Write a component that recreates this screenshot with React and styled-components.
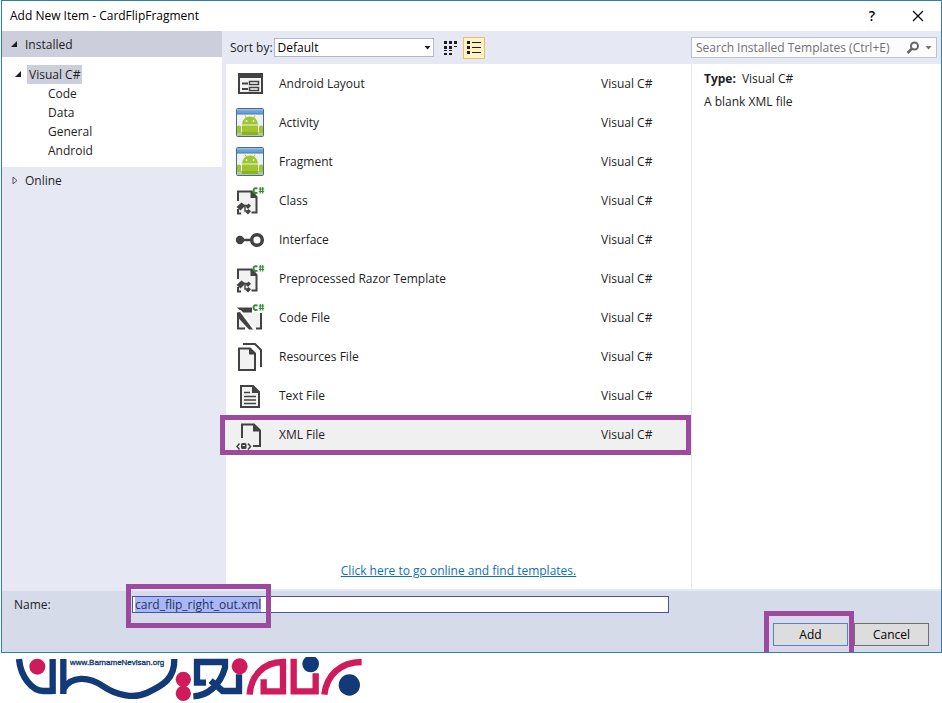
import React, { useLayoutEffect, useRef } from "react";
import styled, { createGlobalStyle, css } from "styled-components";

const GlobalStyle = createGlobalStyle`
  *, *::after { box-sizing: border-box; }
  body {
    margin: 0;
    background: #fff;
    color: #1e1e1e;
    font: 12px/16px "Open Sans", "Noto Sans", sans-serif;
  }
  button, input, select { font: inherit; color: inherit; margin: 0; }
`;

const INK = "#424242";
const PURPLE = "#9b4a9e";

const Page = styled.div`
  padding-left: 1px;
`;

const Dialog = styled.main`
  display: flex;
  flex-direction: column;
  border: 1px solid #2f7fb0;
  background: #e6e9f4;
`;

const TitleBar = styled.header`
  display: flex;
  align-items: center;
  height: 30px;
  padding-left: 8px;
  background: #fff;
  color: #000;
`;

const Title = styled.h1`
  flex: 1;
  margin: 0;
  font-size: 12px;
  font-weight: 400;
`;

const CaptionButton = styled.button`
  display: grid;
  place-items: center;
  width: 46px;
  height: 30px;
  padding: 0;
  border: 0;
  background: none;
  font-size: 14px;
  font-weight: 600;
`;

const Body = styled.div`
  display: grid;
  grid-template-columns: 220px minmax(0, 1fr);
  column-gap: 4px;
`;

const Sidebar = styled.nav``;

const Section = styled.button`
  display: flex;
  align-items: center;
  gap: 6px;
  width: 100%;
  height: 26px;
  padding: 1px 0 0 8px;
  border: 0;
  text-align: left;
  background: ${(p) => (p.$active ? "#cccedb" : "none")};
`;

const Tree = styled.ul`
  margin: 0;
  padding: 8px 0 7px 12px;
  list-style: none;
  background: #fff;
`;

const TreeItem = styled.li`
  display: flex;
  align-items: center;
  gap: 4px;
  height: 19px;
  padding-left: ${(p) => (p.$child ? "32px" : "0")};
`;

const TreeLabel = styled.button`
  height: 19px;
  padding: 0 2px;
  border: 0;
  background: ${(p) => (p.$selected ? "#cccedb" : "none")};
`;

const Workspace = styled.div`
  display: flex;
  flex-direction: column;
`;

const Toolbar = styled.div`
  display: flex;
  align-items: center;
  height: 33px;
  padding: 0 4px;
`;

const SelectBox = styled.div`
  position: relative;
  width: 160px;
  margin: 0 5px 0 1px;
  svg { position: absolute; right: 3px; top: 8px; pointer-events: none; }
`;

const SortSelect = styled.select`
  display: block;
  appearance: none;
  width: 100%;
  height: 19px;
  padding: 0 3px;
  border: 1px solid #b4b8cc;
  border-radius: 0;
  background: #fff;
  color: #000;
`;

const ViewButton = styled.button`
  display: grid;
  place-items: center;
  width: 22px;
  height: 22px;
  margin-right: 2px;
  padding: 0;
  border: 1px solid ${(p) => (p.$active ? "#e5c365" : "transparent")};
  background: ${(p) => (p.$active ? "#fdf2c4" : "none")};
`;

const SearchBox = styled.div`
  display: flex;
  align-items: center;
  gap: 5px;
  width: 246px;
  height: 21px;
  margin-left: auto;
  padding-right: 4px;
  border: 1px solid #bcc0d2;
  background: #fcfcfd;
`;

const SearchInput = styled.input`
  flex: 1;
  min-width: 0;
  height: 19px;
  padding: 0 4px;
  border: 0;
  background: none;
  outline: none;
  &::placeholder { color: #717171; opacity: 1; }
`;

const Panels = styled.div`
  display: grid;
  grid-template-columns: minmax(0, 1fr) 250px;
  margin-bottom: 2px;
  background: #fff;
`;

const Templates = styled.section`
  display: flex;
  flex-direction: column;
`;

const TemplateList = styled.ul`
  margin: 0;
  padding: 0;
  list-style: none;
`;

const frame = css`
  content: "";
  position: absolute;
  border: 5px solid ${PURPLE};
  pointer-events: none;
  z-index: 1;
`;

const Row = styled.li`
  position: relative;
  display: grid;
  grid-template-columns: 32px minmax(0, 1fr) 90px;
  column-gap: 13px;
  align-items: center;
  height: 39px;
  padding-left: 8px;
  background: ${(p) => (p.$selected ? "#f0f0f0" : "#fff")};
  ${(p) => p.$selected && css`&::after { ${frame} inset: 0 0 -1px -6px; }`}
`;

const OnlineLink = styled.a`
  align-self: center;
  margin: 109px 0 10px;
  color: #0e70c0;
`;

const Details = styled.aside`
  padding: 7px 12px;
  border-left: 1px solid #e6e9f4;
`;

const DetailLine = styled.p`
  display: flex;
  gap: 6px;
  margin: 0 0 7px;
`;

const Footer = styled.form`
  display: flex;
  flex-direction: column;
  gap: 10px;
  padding: 5px 12px 6px;
  background: #d6dbe9;
`;

const NameRow = styled.div`
  display: grid;
  grid-template-columns: 118px minmax(0, 537px);
  align-items: center;
`;

const NameField = styled.div`
  position: relative;
  &::after { ${frame} left: -6px; top: -12px; width: 145px; height: 44px; }
`;

const NameInput = styled.input`
  display: block;
  width: 100%;
  height: 17px;
  padding: 0 2px;
  border: 1px solid #4b53a0;
  background: #fff;
  outline: none;
  &::selection { background: #a9b8f5; color: #24305e; }
`;

const Actions = styled.div`
  display: flex;
  justify-content: flex-end;
  gap: 6px;
`;

const AddSlot = styled.div`
  position: relative;
  background: #e3d5ec;
  box-shadow: 0 0 0 6px #e0d6ec;
  clip-path: inset(-12px -6px -6px -9px);
  &::after { ${frame} inset: -12px -6px -6px -9px; border-bottom: 0; }
`;

const DialogButton = styled.button`
  display: block;
  width: 75px;
  height: 23px;
  padding: 0;
  border: 1px solid ${(p) => (p.$primary ? "#3c8fc4" : "#707070")};
  background: #dddddd;
  color: #000;
`;

const Brand = styled.footer`
  padding: 4px 14px 0;
  svg { display: block; }
`;

const Open = () => (
  <svg width="9" height="9" viewBox="0 0 9 9" aria-hidden="true"><path d="M7 1v6H1z" fill="#1e1e1e" /></svg>
);
const Closed = () => (
  <svg width="9" height="9" viewBox="0 0 9 9" aria-hidden="true"><path d="M3 1l4 3.5L3 8z" fill="none" stroke="#555" /></svg>
);
const Caret = ({ color = "#1e1e1e" }) => (
  <svg width="7" height="4" viewBox="0 0 7 4" aria-hidden="true"><path d="M0.5 0h6l-3 3.5z" fill={color} /></svg>
);

const CSharp = () => (
  <g fill="none" stroke="#388a34" strokeWidth="2">
    <path d="M23.500 3.600c-2-.9-4-.2-4 2s2 2.900 4 2" />
    <path d="M26.300 2v6.500M28.700 2v6.500M24.800 4h5.400M24.800 6.500h5.400" strokeWidth="1.200" />
  </g>
);

const ClassGlyph = () => (
  <>
    <path d="M4 7h14l5 5v16H4z" fill="#f2f2f2" />
    <path d="M4 16V6.500h13.500L22.500 12v15.500h-5M4 24v4.500h3" fill="none" stroke={INK} strokeWidth="2" />
    <path d="M16.500 6v7H23z" fill={INK} />
    <CSharp />
    <path d="M7.500 17.500l4 3-5 5-4-3.500z" fill={INK} />
    <path d="M10 20.500h5M11 21v5h3" fill="none" stroke={INK} strokeWidth="1.400" />
    <path d="M14.500 18.500l2.500 2.300-3 3.200-2.300-2.300zM14.500 24l2.500 2.300-3 3.200-2.300-2.300z" fill={INK} />
  </>
);

const AndroidGlyph = () => (
  <>
    <rect x="2.500" y="1.500" width="27" height="28" rx="1" fill="#eef2f3" stroke="#476b91" />
    <path d="M3 2h26v5H3z" fill="#6c9ed6" />
    <path d="M3 2h26v1.500H3z" fill="#9abce4" />
    <path d="M3 7h26" stroke="#4878ad" />
    <path d="M3 25h26v4H3z" fill="#b5c995" />
    <path d="M8 17.500a8 8 0 0 1 16 0zM8 18.500h16V28H8zM3 19.500q2-2 4 0V26H3zM25 19.500q2-2 4 0V26h-4z" fill="#9fc62f" />
    <path d="M11 8.500l1.500 2.500M21 8.500L19.500 11" stroke="#9fc62f" />
    <circle cx="12.500" cy="14" r="0.900" fill="#fff" /><circle cx="19.500" cy="14" r="0.900" fill="#fff" />
    <path d="M8 25h16v3H8z" fill="#87b325" />
  </>
);

const glyphs = {
  layout: (
    <>
      <path d="M5 6h23v19H5z" fill="#f4f4f4" stroke={INK} strokeWidth="2" />
      <path d="M4 5h25v5H4z" fill={INK} />
      <path d="M8 15.500h6M8 21h6" stroke={INK} strokeWidth="2" />
      <path d="M15.500 13.500h9v3h-9zM15.500 19.500h9v3h-9z" fill="#fff" stroke={INK} strokeWidth="1.500" />
    </>
  ),
  android: <AndroidGlyph />,
  class: <ClassGlyph />,
  interface: (
    <>
      <path d="M6 16h14" stroke={INK} strokeWidth="2.500" />
      <circle cx="6" cy="16" r="4.200" fill={INK} />
      <circle cx="23" cy="16" r="5.300" fill="#fff" stroke={INK} strokeWidth="3.500" />
    </>
  ),
  code: (
    <>
      <path d="M5 10h18l4 3v13H5z" fill="#f2f2f2" />
      <path d="M3 5.500h15v5H8z" fill={INK} />
      <path d="M4 15v11.500h7M27 11v15.500h-5" fill="none" stroke={INK} strokeWidth="2" />
      <path d="M2 8h5l15 19.500H15L2 13z" fill="#fff" />
      <path d="M3 10.500l3-.5 13 17.500h-4L3 14.500z" fill={INK} />
      <CSharp />
    </>
  ),
  resources: (
    <>
      <path d="M9 3h12l6 6v17" fill="none" stroke={INK} strokeWidth="2" />
      <path d="M5 7.500h11l5 5V29H5z" fill="#f2f2f2" stroke={INK} strokeWidth="2" />
      <path d="M15 7v6.500h6.500z" fill={INK} />
    </>
  ),
  text: (
    <>
      <path d="M7 6h12l6 6v15H7z" fill="#f4f4f4" stroke={INK} strokeWidth="2" />
      <path d="M18 5.500V13h7z" fill={INK} />
      <path d="M10 12.500h6M10 16.500h12M10 20h12M10 23.500h12" stroke={INK} strokeWidth="1.600" />
    </>
  ),
  xml: (
    <>
      <path d="M8 19V5.500h12l6 6V27h-7" fill="none" stroke={INK} strokeWidth="2" />
      <path d="M19 5v7.500h7.500z" fill={INK} />
      <path d="M5.500 24.500L3 27.500l2.500 3M14 24.500l2.500 3-2.500 3" fill="none" stroke={INK} strokeWidth="1.500" />
      <rect x="7" y="24" width="5.500" height="6" rx="1.500" fill={INK} />
      <path d="M8.500 26.500h2.500" stroke="#f0f0f0" />
    </>
  ),
};

const templates = [
  ["layout", "Android Layout"],
  ["android", "Activity"],
  ["android", "Fragment"],
  ["class", "Class"],
  ["interface", "Interface"],
  ["class", "Preprocessed Razor Template"],
  ["code", "Code File"],
  ["resources", "Resources File"],
  ["text", "Text File"],
  ["xml", "XML File"],
];

const Logo = () => (
  <svg width="349" height="46" viewBox="45 24 1047 138" role="img" aria-label="BarnameNevisan">
    <g fill="none" stroke="#123a78" strokeWidth="19">
      <path d="M57 30C62 86 98 126 130 126H158M158 30V135M190 30V135" />
      <path d="M190 120C214 80 266 82 310 112C352 141 405 148 440 132C492 108 524 88 523 30" />
      <path d="M618 101H591V39H675V56C660 110 622 140 580 142M632 95L668 126H717V76" />
    </g>
    <g fill="none" stroke="#cf1a5b" strokeWidth="19">
      <path d="M749 137C752 82 790 39 849 39V127H791V91" />
      <path d="M881 29V127H947V73M973 137C980 80 1020 39 1085 39" />
    </g>
    <g fill="#cf1a5b">
      <circle cx="112" cy="53" r="24" /><circle cx="550" cy="91" r="23" />
      <circle cx="550" cy="133" r="23" /><circle cx="719" cy="52" r="24" />
    </g>
    <g fill="#123a78"><circle cx="932" cy="45" r="25" /><circle cx="1048" cy="108" r="32" /></g>
    <text x="210" y="47" fontFamily="Liberation Sans, sans-serif" fontSize="24" fill="#123a78" stroke="#123a78" strokeWidth="1">www.BarnameNevisan.org</text>
  </svg>
);

export default function App() {
  const name = useRef(null);
  useLayoutEffect(() => {
    name.current.focus();
    name.current.select();
  }, []);

  return (
    <Page>
      <GlobalStyle />
      <Dialog>
        <TitleBar>
          <Title>Add New Item - CardFlipFragment</Title>
          <CaptionButton aria-label="Help">?</CaptionButton>
          <CaptionButton aria-label="Close">
            <svg width="12" height="12" viewBox="0 0 12 12"><path d="M1 1l10 10M11 1L1 11" stroke="#000" strokeWidth="1.200" /></svg>
          </CaptionButton>
        </TitleBar>
        <Body>
          <Sidebar aria-label="Template categories">
            <Section $active aria-expanded="true"><Open />Installed</Section>
            <Tree>
              <TreeItem><Open /><TreeLabel $selected>Visual C#</TreeLabel></TreeItem>
              {["Code", "Data", "General", "Android"].map((t) => (
                <TreeItem key={t} $child><TreeLabel>{t}</TreeLabel></TreeItem>
              ))}
            </Tree>
            <Section aria-expanded="false"><Closed />Online</Section>
          </Sidebar>
          <Workspace>
            <Toolbar>
              <label htmlFor="sort">Sort by:</label>
              <SelectBox>
                <SortSelect id="sort" defaultValue="Default"><option>Default</option></SortSelect>
                <Caret />
              </SelectBox>
              <ViewButton aria-label="Small icons">
                <svg width="14" height="14" viewBox="0 0 14 14" fill="#1e1e1e">
                  <path d="M1 0h3v3H1zM6 0h3v3H6zM11 0h3v3h-3zM1 5h3v3H1zM6 5h3v3H6zM11 5h3v1h-3zM1 9h3v1H1zM6 9h3v1H6zM1 12h3v2H1zM6 12h3v2H6z" />
                </svg>
              </ViewButton>
              <ViewButton $active aria-label="Medium icons" aria-pressed="true">
                <svg width="14" height="14" viewBox="0 0 14 14" fill="#1e1e1e">
                  <path d="M0 0h3v3H0zM0 5h3v3H0zM0 10h3v3H0zM5 1h9v1H5zM5 6h9v1H5zM5 11h9v1H5z" />
                </svg>
              </ViewButton>
              <SearchBox>
                <SearchInput type="text" aria-label="Search Installed Templates" placeholder="Search Installed Templates (Ctrl+E)" />
                <svg width="14" height="14" viewBox="0 0 14 14" fill="none" stroke="#666" aria-hidden="true">
                  <circle cx="8.500" cy="5" r="3.500" strokeWidth="2" /><path d="M6 7.500L1.500 12" strokeWidth="2.500" />
                </svg>
                <Caret color="#717171" />
              </SearchBox>
            </Toolbar>
            <Panels>
              <Templates>
                <TemplateList>
                  {templates.map(([icon, label]) => (
                    <Row key={label} $selected={icon === "xml"}>
                      <svg width="32" height="32" viewBox="0 0 32 32" aria-hidden="true">{glyphs[icon]}</svg>
                      <span>{label}</span>
                      <span>Visual C#</span>
                    </Row>
                  ))}
                </TemplateList>
                <OnlineLink href="#online">Click here to go online and find templates.</OnlineLink>
              </Templates>
              <Details>
                <DetailLine><strong>Type:</strong><span>Visual C#</span></DetailLine>
                <DetailLine>A blank XML file</DetailLine>
              </Details>
            </Panels>
          </Workspace>
        </Body>
        <Footer onSubmit={(e) => e.preventDefault()}>
          <NameRow>
            <label htmlFor="name">Name:</label>
            <NameField><NameInput id="name" ref={name} defaultValue="card_flip_right_out.xml" spellCheck={false} /></NameField>
          </NameRow>
          <Actions>
            <AddSlot><DialogButton $primary type="submit">Add</DialogButton></AddSlot>
            <DialogButton type="button">Cancel</DialogButton>
          </Actions>
        </Footer>
      </Dialog>
      <Brand><Logo /></Brand>
    </Page>
  );
}
